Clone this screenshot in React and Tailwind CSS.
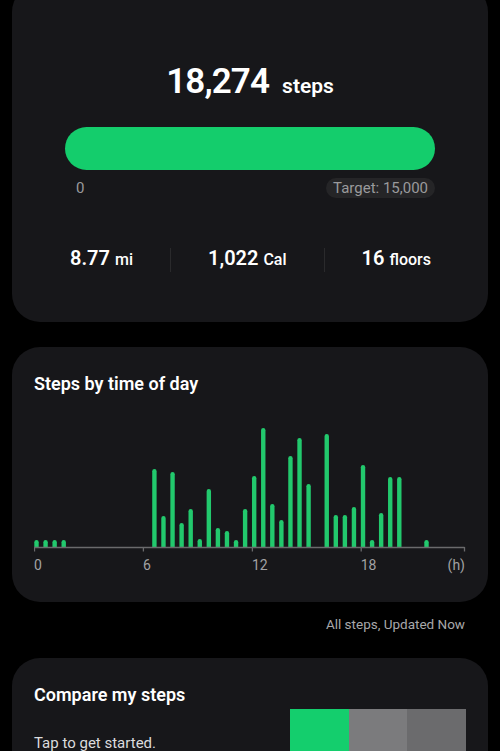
import React from 'react';

const BAR_W = 4.4;
const BIN = 9.07;
const BASE = 147;

// 30-minute bins: [bin index, bar height in px]
const bins = [
  [0, 7], [1, 7], [2, 7], [3, 7],
  [13, 78], [14, 31], [15, 75], [16, 24], [17, 38], [18, 8], [19, 58], [20, 19],
  [21, 16], [22, 7], [23, 38], [24, 71], [25, 119], [26, 43], [27, 27], [28, 91],
  [29, 109], [30, 63], [32, 113], [33, 32], [34, 32], [35, 40], [36, 82], [37, 7],
  [38, 34], [39, 70], [40, 70], [43, 7],
];

function barPath(i, h) {
  const x = 0.3 + i * BIN;
  const r = BAR_W / 2;
  const top = BASE - h;
  return `M${x},${BASE} V${top + r} A${r},${r} 0 0 1 ${x + BAR_W},${top + r} V${BASE} Z`;
}

function StepsChart() {
  const ticks = [0, 108.9, 217.9, 326.7, 430];
  const labels = [
    { x: 0, t: '0', anchor: 'start' },
    { x: 108.9, t: '6', anchor: 'start' },
    { x: 217.9, t: '12', anchor: 'start' },
    { x: 326.7, t: '18', anchor: 'start' },
    { x: 431, t: '(h)', anchor: 'end' },
  ];
  return (
    <svg width="434" height="180" viewBox="0 0 434 180" className="block">
      {bins.map(([i, h]) => (
        <path key={i} d={barPath(i, h)} fill="#22c96d" />
      ))}
      <line x1="0.3" y1={BASE + 0.5} x2="430.5" y2={BASE + 0.5} stroke="#6a6a6c" strokeWidth="1.5" />
      {ticks.map((x) => (
        <line key={x} x1={x + 0.5} y1={BASE} x2={x + 0.5} y2={BASE + 4.5} stroke="#6a6a6c" strokeWidth="1.3" />
      ))}
      {labels.map((l) => (
        <text
          key={l.t}
          x={l.x}
          y="170"
          textAnchor={l.anchor}
          fill="#a2a2a4"
          fontSize="14"
          fontFamily="Roboto, sans-serif"
        >
          {l.t}
        </text>
      ))}
    </svg>
  );
}

function Stat({ value, unit }) {
  return (
    <div className="flex items-baseline gap-[5px] text-white">
      <span className="text-[20px] font-semibold leading-none">{value}</span>
      <span className="text-[16px] font-medium leading-none">{unit}</span>
    </div>
  );
}

export default function App() {
  return (
    <div className="w-full h-[751px] overflow-hidden bg-black font-['Roboto',sans-serif]">
      {/* Today's steps */}
      <div className="mx-3 -mt-4 rounded-[28px] bg-[#17171a] px-[53px] pt-[80px] pb-[50px]">
        <div className="flex items-baseline justify-center gap-[13px] text-white">
          <span className="text-[35px] font-semibold leading-none tracking-tight">18,274</span>
          <span className="text-[21px] font-semibold leading-none">steps</span>
        </div>
        <div className="mt-[28px] h-[43px] w-full rounded-full bg-[#14cd6c]" />
        <div className="mt-2 flex items-center justify-between">
          <span className="pl-[11px] text-[15px] leading-none text-[#9a9a9c]">0</span>
          <span className="flex h-[20px] items-center rounded-full bg-[#252527] px-[7px] text-[15px] leading-none text-[#9a9a9c]">
            Target: 15,000
          </span>
        </div>
        <div className="mt-[50px] flex h-[24px] items-start justify-between pl-[5px] pr-[4px]">
          <Stat value="8.77" unit="mi" />
          <div className="h-[24px] w-px bg-[#2a2a2c]" />
          <Stat value="1,022" unit="Cal" />
          <div className="h-[24px] w-px bg-[#2a2a2c]" />
          <Stat value="16" unit="floors" />
        </div>
      </div>

      {/* Steps by time of day */}
      <div className="mx-3 mt-[25px] rounded-[28px] bg-[#17171a] pl-[22px] pt-[28px] pb-[22px]">
        <h2 className="text-[18px] font-semibold leading-none text-white">Steps by time of day</h2>
        <div className="mt-[7px]">
          <StepsChart />
        </div>
      </div>

      <div className="flex justify-end pr-[35px] pt-[16px]">
        <span className="text-[13.5px] leading-none text-[#a8a8aa]">All steps, Updated Now</span>
      </div>

      {/* Compare my steps */}
      <div className="mx-3 mt-[26px] rounded-[28px] bg-[#17171a] px-[22px] pt-[28px] pb-6">
        <h2 className="text-[18px] font-semibold leading-none text-white">Compare my steps</h2>
        <div className="mt-[5px] flex items-start justify-between">
          <p className="pt-[27px] text-[15px] leading-none text-[#dcdcde]">Tap to get started.</p>
          <div className="flex h-[60px] w-[176px]">
            <div className="flex-1 bg-[#14ce6d]" />
            <div className="flex-1 bg-[#7b7b7d]" />
            <div className="flex-1 bg-[#6b6b6d]" />
          </div>
        </div>
      </div>
    </div>
  );
}
